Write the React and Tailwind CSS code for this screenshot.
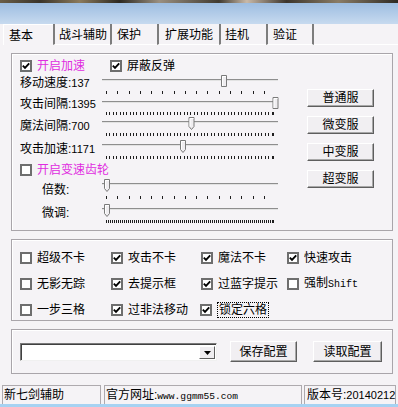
import React from "react";

function Check({ checked }) {
  return (
    <span className="w-[12px] h-[12px] border-2 border-[#6e6e6e] bg-white flex items-center justify-center shrink-0">
      {checked && (
        <svg width="8" height="8" viewBox="0 0 8 8" className="block">
          <path d="M0.8 3.6 L3 5.8 L7.2 1.4" stroke="#000" strokeWidth="1.9" fill="none" />
        </svg>
      )}
    </span>
  );
}

function CheckItem({ checked, label, magenta, focus }) {
  return (
    <div className="flex items-center gap-[5px] h-[12px]">
      <Check checked={checked} />
      <span
        className={
          (magenta ? "text-[#e02ce0] " : "text-black ") +
          (focus ? "border border-dotted border-black px-[1px] leading-[14px]" : "leading-[14px]") +
          " whitespace-nowrap"
        }
      >
        {label}
      </span>
    </div>
  );
}

function Btn({ children, w = "w-[67px]", h = "h-[18px]" }) {
  return (
    <div
      className={
        w +
        " " +
        h +
        " bg-[#f1eff2] border border-t-[#ffffff] border-l-[#ffffff] border-r-[#5e5e5e] border-b-[#5e5e5e] shadow-[inset_-1px_-1px_0_#a8a8a8] flex items-center justify-center text-[12px] text-black leading-none"
      }
    >
      {children}
    </div>
  );
}

function Slider({ pos, step, trackY = 8, tickY = 19, h = 22, pointed = false }) {
  const xs = [];
  for (let x = 4; x <= 171.6; x += step) xs.push(Math.round(x));
  if (step < 5) xs.push(171);
  const top = pointed ? trackY - 5 : trackY - 5;
  return (
    <svg width="180" height={h} className="block shrink-0 overflow-visible">
      <rect x="0" y={trackY - 1} width="176" height="1" fill="#8e8e8e" />
      <rect x="0" y={trackY} width="176" height="1" fill="#e2e2e2" />
      {xs.map((x, i) => (
        <rect key={i} x={x} y={tickY} width="1" height="3" fill="#1e1e1e" />
      ))}
      <g transform={`translate(${pos - 3},${top})`}>
        <path
          d={pointed ? "M0.5 0.5H5.5V9.5L3 12.5L0.5 9.5Z" : "M0.5 0.5H5.5V11.5H0.5Z"}
          fill="#efedf0"
          stroke="#7a7a7a"
          strokeWidth="1"
        />
        <path d={pointed ? "M1.5 9.5V1.5H5" : "M1.5 11V1.5H5"} stroke="#ffffff" strokeWidth="1" fill="none" />
      </g>
    </svg>
  );
}

function SliderRow({ label, value, h, pos, step, pointed, tickY, labelOffset = 0 }) {
  return (
    <div className="flex items-start" style={{ height: h }}>
      <div className="w-[82px] flex items-center whitespace-nowrap leading-none" style={{ paddingTop: 5 + labelOffset }}>
        <span className="text-[12px]">{label}:</span>
        <span className="text-[11px]">{value}</span>
      </div>
      <Slider pos={pos} step={step} h={h} pointed={pointed} tickY={tickY} />
    </div>
  );
}

export default function App() {
  return (
    <div className="w-[398px] h-[407px] overflow-hidden flex flex-col bg-[#f5f3f6] text-black text-[12px] font-['Liberation_Sans','Noto_Sans_CJK_SC',sans-serif]">
      {/* top textured strip */}
      <div className="h-[3px] bg-[linear-gradient(90deg,#6b5e48,#3a342a_10%,#8b7a5c_20%,#2c2820_30%,#9a8f80_40%,#403a30_55%,#c9b9a8_62%,#3c352c_72%,#8a7c66_85%,#2e2a24)]" />
      {/* title blue */}
      <div className="h-[21px] bg-gradient-to-b from-[#9dbde1] to-[#c7daef]" />

      {/* tabs */}
      <div className="h-[21px] flex pl-[3px] text-[12px] leading-none">
        <div className="w-[50px] pl-[5px] pt-[5px] bg-[#f5f3f6] border-l border-t border-white">基本</div>
        <div className="w-[57px] pl-[4px] pt-[5px] border-l-2 border-l-[#7d7d7d] border-b border-b-white">战斗辅助</div>
        <div className="w-[47px] pl-[5px] pt-[5px] border-l-2 border-l-[#7d7d7d] border-b border-b-white">保护</div>
        <div className="w-[62px] pl-[6px] pt-[5px] border-l-2 border-l-[#7d7d7d] border-b border-b-white">扩展功能</div>
        <div className="w-[47px] pl-[4px] pt-[5px] border-l-2 border-l-[#7d7d7d] border-b border-b-white">挂机</div>
        <div className="w-[48px] pl-[5px] pt-[5px] border-l-2 border-l-[#7d7d7d] border-r-2 border-r-[#7d7d7d] border-b border-b-white">验证</div>
        <div className="flex-1 border-b border-b-white" />
      </div>

      {/* group 1 */}
      <div className="mt-[8px] ml-[11px] w-[382px] h-[178px] border border-[#a9a5aa] shadow-[inset_1px_1px_0_#ffffff] flex">
        <div className="pl-[8px] w-[270px] flex flex-col">
          <div className="mt-[5px] h-[13px] flex items-center">
            <div className="w-[90px]">
              <CheckItem checked label="开启加速" magenta />
            </div>
            <CheckItem checked label="屏蔽反弹" />
          </div>
          <SliderRow label="移动速度" value="137" h={22} pos={122} step={11.27} tickY={19} />
          <SliderRow label="攻击间隔" value="1395" h={20} pos={173.5} step={3.38} tickY={18} labelOffset={-1} />
          <SliderRow label="魔法间隔" value="700" h={23} pos={89.5} step={3.38} tickY={19} pointed labelOffset={1} />
          <SliderRow label="攻击加速" value="1171" h={22} pos={81} step={3.38} tickY={19} pointed labelOffset={1} />
          <div className="mt-[4px] h-[13px] flex items-center">
            <CheckItem label="开启变速齿轮" magenta />
          </div>
          <div className="flex items-start h-[25px]">
            <div className="w-[82px] pl-[22px] pt-[8px] leading-none">倍数:</div>
            <Slider pos={5} step={11.27} h={25} trackY={8} tickY={20} pointed />
          </div>
          <div className="flex items-start h-[24px]">
            <div className="w-[82px] pl-[22px] pt-[6px] leading-none">微调:</div>
            <Slider pos={5} step={2} h={24} trackY={8} tickY={19} pointed />
          </div>
        </div>
        <div className="ml-[25px] pt-[35px] flex flex-col gap-[9px]">
          <Btn>普通服</Btn>
          <Btn>微变服</Btn>
          <Btn>中变服</Btn>
          <Btn>超变服</Btn>
        </div>
      </div>

      {/* group 2 */}
      <div className="mt-[8px] ml-[11px] w-[382px] h-[82px] border border-[#a9a5aa] shadow-[inset_1px_1px_0_#ffffff] pl-[8px] pt-[12px] flex flex-col gap-[14px]">
        <div className="flex">
          <div className="w-[91px]"><CheckItem label="超级不卡" /></div>
          <div className="w-[90px]"><CheckItem checked label="攻击不卡" /></div>
          <div className="w-[86px]"><CheckItem checked label="魔法不卡" /></div>
          <div><CheckItem checked label="快速攻击" /></div>
        </div>
        <div className="flex">
          <div className="w-[91px]"><CheckItem label="无影无踪" /></div>
          <div className="w-[90px]"><CheckItem checked label="去提示框" /></div>
          <div className="w-[86px]"><CheckItem checked label="过蓝字提示" /></div>
          <div>
            <div className="flex items-center gap-[5px] h-[12px]">
              <Check />
              <span className="leading-[14px] whitespace-nowrap">
                强制<span className="font-['Liberation_Mono',monospace] text-[10px]">Shift</span>
              </span>
            </div>
          </div>
        </div>
        <div className="flex">
          <div className="w-[91px]"><CheckItem label="一步三格" /></div>
          <div className="w-[89px]"><CheckItem checked label="过非法移动" /></div>
          <div className="w-[86px]"><CheckItem checked label="锁定六格" focus /></div>
        </div>
      </div>

      {/* group 3 */}
      <div className="mt-[8px] ml-[11px] w-[382px] h-[45px] border border-[#a9a5aa] shadow-[inset_1px_1px_0_#ffffff] pl-[8px] pt-[11px] flex items-start">
        <div className="mt-[2px] w-[197px] h-[18px] bg-white border border-t-[#7a7a7a] border-l-[#7a7a7a] border-r-[#f0f0f0] border-b-[#f0f0f0] shadow-[inset_1px_1px_0_#404040] flex justify-end items-stretch p-[1px] pl-[2px] pt-[2px]">
          <div className="w-[16px] bg-[#efedf0] border border-t-white border-l-white border-r-[#5e5e5e] border-b-[#5e5e5e] flex items-center justify-center">
            <svg width="7" height="4" viewBox="0 0 7 4" className="block">
              <path d="M0 0H7L3.5 4Z" fill="#000" />
            </svg>
          </div>
        </div>
        <div className="ml-[13px]">
          <Btn h="h-[21px]">保存配置</Btn>
        </div>
        <div className="ml-[16px]">
          <Btn w="w-[69px]" h="h-[21px]">读取配置</Btn>
        </div>
      </div>

      {/* status bar */}
      <div className="mt-[11px] h-[19px] flex">
        <div className="ml-[2px] w-[99px] border border-[#aeaaae] border-b-0 pl-[1px] pt-[3px] leading-none whitespace-nowrap">新七剑辅助</div>
        <div className="ml-[3px] w-[198px] border border-[#aeaaae] border-b-0 pl-[1px] pt-[3px] leading-none whitespace-nowrap">
          官方网址:<span className="font-['Liberation_Mono',monospace] text-[9.6px]">www.ggmm55.com</span>
        </div>
        <div className="ml-[2px] w-[92px] border border-[#aeaaae] border-b-0 pl-[2px] pt-[3px] leading-none whitespace-nowrap">
          版本号:<span className="text-[11px]">20140212</span>
        </div>
      </div>
      <div className="h-[3px] bg-[#a6d2f2]" />
    </div>
  );
}
